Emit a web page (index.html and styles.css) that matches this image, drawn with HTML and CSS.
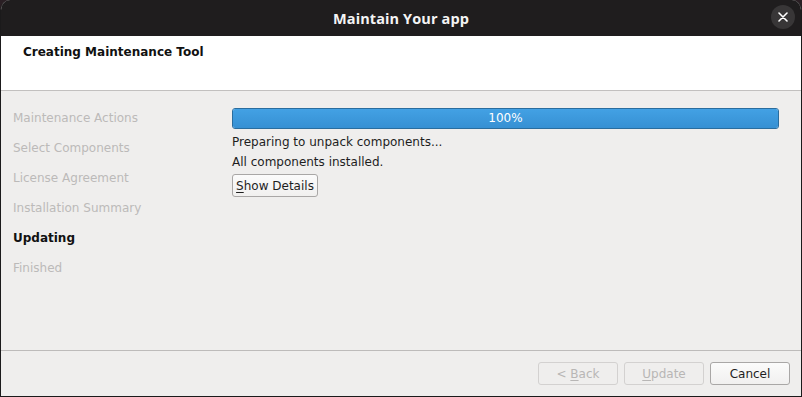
FILE: index.html
```html
<!DOCTYPE html>
<html>
<head>
<meta charset="utf-8">
<link rel="stylesheet" href="styles.css">
</head>
<body>
<div class="window">
  <div class="titlebar">
    <span class="title">Maintain Your app</span>
    <button class="close" aria-label="Close">
      <svg width="10" height="10" viewBox="0 0 10 10"><path d="M1 1L9 9M9 1L1 9" stroke="#ffffff" stroke-width="1.6" stroke-linecap="round"/></svg>
    </button>
  </div>
  <div class="header">
    <div class="page-title">Creating Maintenance Tool</div>
  </div>
  <div class="main">
    <ul class="steps">
      <li>Maintenance Actions</li>
      <li>Select Components</li>
      <li>License Agreement</li>
      <li>Installation Summary</li>
      <li class="current">Updating</li>
      <li>Finished</li>
    </ul>
    <div class="content">
      <div class="progress"><div class="bar" style="width:100%"></div><span class="pct">100%</span></div>
      <div class="line first">Preparing to unpack components...</div>
      <div class="line">All components installed.</div>
      <button class="btn details"><u>S</u>how Details</button>
    </div>
  </div>
  <div class="footer">
    <button class="btn wide" disabled>&lt; <u>B</u>ack</button>
    <button class="btn wide" disabled><u>U</u>pdate</button>
    <button class="btn wide">Cancel</button>
  </div>
</div>
</body>
</html>
```
FILE: styles.css
```css
html, body {
  margin: 0;
  padding: 0;
  background: #2a1f24;
  width: 802px;
  height: 397px;
  overflow: hidden;
}
.window {
  width: 802px;
  height: 397px;
  display: flex;
  flex-direction: column;
  border-left: 1px solid #1b1a1b;
  border-right: 1px solid #1b1a1b;
  border-bottom: 1px solid #1b1a1b;
  border-radius: 10px 10px 0 0;
  overflow: hidden;
  font-family: "DejaVu Sans", sans-serif;
  font-size: 12px;
  color: #1e1e1e;
  background: #efeeed;
  box-sizing: border-box;
}
.titlebar {
  height: 36px;
  flex: none;
  background: #1f1d1e;
  display: flex;
  align-items: center;
  justify-content: center;
  position: relative;
}
.title {
  font-family: "Open Sans", "DejaVu Sans", sans-serif;
  font-weight: 700;
  font-size: 14.5px;
  color: #f4f4f4;
  letter-spacing: 0.1px;
}
.close {
  position: absolute;
  right: 6px;
  top: 5px;
  width: 24px;
  height: 24px;
  border-radius: 50%;
  border: none;
  background: #383637;
  padding: 0;
  display: flex;
  align-items: center;
  justify-content: center;
}
.header {
  height: 55px;
  flex: none;
  background: #ffffff;
  border-bottom: 1px solid #c2c0bf;
  padding: 9px 0 0 22px;
  box-sizing: border-box;
}
.page-title {
  font-weight: 700;
  font-size: 12px;
  line-height: 15px;
  color: #111;
}
.main {
  flex: 1;
  display: flex;
  border-bottom: 1px solid #bdbbba;
}
.steps {
  list-style: none;
  margin: 0;
  padding: 12px 0 0 12px;
  width: 219px;
  flex: none;
}
.steps li {
  height: 30px;
  line-height: 30px;
  color: #bcbab9;
}
.steps li.current {
  font-weight: 700;
  color: #111;
}
.content {
  flex: 1;
  padding: 17px 22px 0 0;
  display: flex;
  flex-direction: column;
  align-items: flex-start;
}
.progress {
  position: relative;
  align-self: stretch;
  height: 21px;
  box-sizing: border-box;
  border: 1px solid #2a6d9e;
  border-radius: 3px;
  background: #e6e5e4;
  overflow: hidden;
}
.bar {
  height: 100%;
  background: linear-gradient(#43a1e4, #3690d3);
}
.pct {
  position: absolute;
  inset: 0;
  text-align: center;
  line-height: 19px;
  color: #ffffff;
}
.line {
  line-height: 20px;
}
.line.first { margin-top: 3px; }
.btn {
  font-family: "DejaVu Sans", sans-serif;
  font-size: 12px;
  color: #1e1e1e;
  background: linear-gradient(#fbfbfb, #f1f0ef);
  border: 1px solid #a9a7a6;
  border-radius: 3px;
  height: 23px;
  padding: 0 3px;
  box-sizing: border-box;
}
.btn u { text-decoration: underline; text-underline-offset: 2px; }
.details {
  margin-top: 2px;
  width: 86px;
  padding: 0;
}
.footer {
  height: 45px;
  flex: none;
  display: flex;
  justify-content: flex-end;
  gap: 6px;
  padding: 11px 11px 0 0;
  box-sizing: border-box;
}
.wide { width: 80px; }
.btn:disabled {
  color: #b8b6b5;
  border-color: #d3d1d0;
  background: #efeeed;
}
```
